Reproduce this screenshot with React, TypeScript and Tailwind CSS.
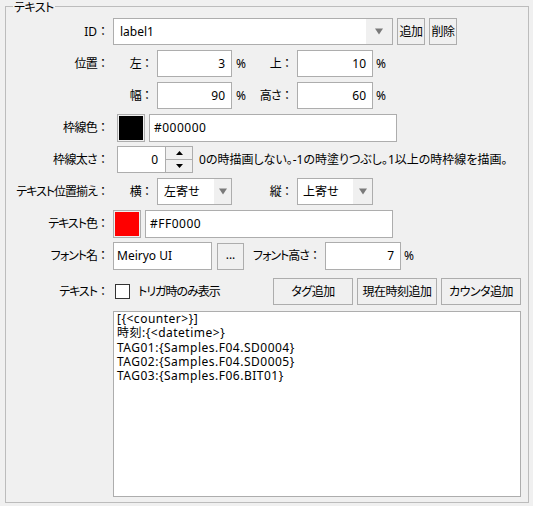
import React from 'react';

const FONT = '"Noto Sans", "Noto Sans CJK JP", sans-serif';

// full-width colon keeps its full cell (no proportional spacing)
function Colon() {
  return <span className="[font-feature-settings:normal] tracking-normal">：</span>;
}

function Label({ text, w = 'w-[107px]', tight = 'tracking-[-0.7px]' }: { text?: string; w?: string; tight?: string }) {
  return (
    <div className={`${w} shrink-0 text-right pr-[4px] whitespace-nowrap`}>
      {text && (
        <>
          <span className={tight}>{text}</span>
          <Colon />
        </>
      )}
    </div>
  );
}

function TextBox({ value, w, align = 'left', pad = 'pl-[4px]', h = 'h-[27px]' }: { value: string; w: string; align?: 'left' | 'right'; pad?: string; h?: string }) {
  return (
    <div className={`${w} ${h} shrink-0 bg-white border border-[#adadad] flex items-center ${pad} ${align === 'right' ? 'justify-end pr-[6px]' : ''}`}>
      {value}
    </div>
  );
}

function Arrow() {
  return (
    <svg width="8" height="7" viewBox="0 0 8 7">
      <path d="M0 0.5 H8 L4 6.5 Z" fill="#7a7a7a" />
    </svg>
  );
}

function Combo({ value, w, pad = 'pl-[6px]', aw = 'w-[19px]' }: { value: string; w: string; pad?: string; aw?: string }) {
  return (
    <div className={`${w} h-[27px] shrink-0 border border-[#adadad] bg-white flex`}>
      <div className={`flex-1 flex items-center ${pad}`}>{value}</div>
      <div className={`${aw} bg-[#f0f0f0] flex items-center justify-center`}>
        <Arrow />
      </div>
    </div>
  );
}

function Btn({ children, w, className = '' }: { children: React.ReactNode; w: string; className?: string }) {
  return (
    <button className={`${w} h-[27px] shrink-0 border border-[#adadad] bg-[#f0f0f0] flex items-center justify-center ${className}`}>
      {children}
    </button>
  );
}

export default function App() {
  return (
    <div
      className="w-[533px] h-[506px] bg-[#f0f0f0] text-[12px] leading-[14px] text-black pt-[6px] pl-[5px] [font-feature-settings:'palt']"
      style={{ fontFamily: FONT }}
    >
      <div className="relative w-[524px] h-[497px] border border-[#bcbcbc] flex flex-col">
        <div className="absolute left-[7px] top-[-6px] bg-[#f0f0f0] px-[1px] leading-[13px] tracking-[-0.5px]">テキスト</div>

        {/* ID */}
        <div className="flex items-center mt-[11px] h-[27px]">
          <Label text="ID" tight="" />
          <Combo value="label1" w="w-[280px]" aw="w-[26px]" />
          <Btn w="w-[28px]" className="ml-[4px] tracking-[-0.5px]">追加</Btn>
          <Btn w="w-[28px]" className="ml-[4px] tracking-[-0.5px]">削除</Btn>
        </div>

        {/* position */}
        <div className="flex items-center mt-[5px] h-[27px]">
          <Label text="位置" />
          <Label text="左" w="w-[44px]" />
          <TextBox value="3" w="w-[75px]" align="right" />
          <div className="w-[24px] pl-[4px]">%</div>
          <Label text="上" w="w-[41px]" />
          <TextBox value="10" w="w-[76px]" align="right" />
          <div className="pl-[3px]">%</div>
        </div>

        <div className="flex items-center mt-[5px] h-[27px]">
          <Label />
          <Label text="幅" w="w-[44px]" />
          <TextBox value="90" w="w-[75px]" align="right" />
          <div className="w-[24px] pl-[4px]">%</div>
          <Label text="高さ" w="w-[41px]" />
          <TextBox value="60" w="w-[76px]" align="right" />
          <div className="pl-[3px]">%</div>
        </div>

        {/* border color */}
        <div className="flex items-center mt-[5px] h-[28px]">
          <Label text="枠線色" />
          <div className="ml-[4px] w-[28px] h-[28px] border border-[#adadad] bg-[#f0f0f0] p-[1px]">
            <div className="w-full h-full bg-black" />
          </div>
          <div className="ml-[4px] tracking-[0.5px]">
            <TextBox value="#000000" w="w-[248px]" h="h-[28px]" />
          </div>
        </div>

        {/* border width */}
        <div className="flex items-center mt-[4px] h-[27px]">
          <Label text="枠線太さ" />
          <div className="ml-[4px] flex h-[27px]">
            <div className="w-[49px] h-full bg-white border border-[#adadad] flex items-center justify-end pr-[7px]">0</div>
            <div className="w-[27px] h-full border border-l-0 border-[#adadad] flex flex-col bg-[#f0f0f0]">
              <div className="flex-1 flex items-center justify-center border-b border-[#adadad]">
                <svg width="7" height="4" viewBox="0 0 7 4"><path d="M0 4 H7 L3.5 0 Z" fill="#000" /></svg>
              </div>
              <div className="flex-1 flex items-center justify-center">
                <svg width="7" height="4" viewBox="0 0 7 4"><path d="M0 0 H7 L3.5 4 Z" fill="#000" /></svg>
              </div>
            </div>
          </div>
          <div className="ml-[6px] whitespace-nowrap">0の時描画しない。-1の時塗りつぶし。1以上の時枠線を描画。</div>
        </div>

        {/* alignment */}
        <div className="flex items-center mt-[5px] h-[27px]">
          <Label text="テキスト位置揃え" tight="tracking-[-1px]" />
          <Label text="横" w="w-[44px]" />
          <Combo value="左寄せ" w="w-[75px]" pad="pl-[6px]" aw="w-[17px]" />
          <Label text="縦" w="w-[65px]" />
          <Combo value="上寄せ" w="w-[76px]" pad="pl-[5px]" aw="w-[19px]" />
        </div>

        {/* text color */}
        <div className="flex items-center mt-[5px] h-[28px]">
          <Label text="テキスト色" tight="tracking-[-1px]" />
          <div className="w-[28px] h-[28px] border border-[#adadad] bg-[#f0f0f0] p-[1px]">
            <div className="w-full h-full bg-[#ff0000]" />
          </div>
          <div className="ml-[4px] tracking-[0.5px]">
            <TextBox value="#FF0000" w="w-[248px]" h="h-[28px]" />
          </div>
        </div>

        {/* font */}
        <div className="flex items-center mt-[4px] h-[28px]">
          <Label text="フォント名" tight="tracking-[-1px]" />
          <TextBox value="Meiryo UI" w="w-[99px]" pad="pl-[3px]" h="h-[28px]" />
          <Btn w="w-[27px]" className="ml-[5px] pb-[2px]">...</Btn>
          <Label text="フォント高さ" w="w-[81px]" tight="tracking-[-1px]" />
          <TextBox value="7" w="w-[76px]" align="right" h="h-[28px]" />
          <div className="pl-[3px]">%</div>
        </div>

        {/* text */}
        <div className="flex items-center mt-[8px] h-[27px]">
          <Label text="テキスト" tight="tracking-[-1px]" />
          <div className="ml-[2px] w-[15px] h-[15px] border border-[#333333] bg-white" />
          <div className="ml-[8px] whitespace-nowrap tracking-[-1px]">トリガ時のみ表示</div>
          <Btn w="w-[80px]" className="ml-auto tracking-[-0.5px]">タグ追加</Btn>
          <Btn w="w-[80px]" className="ml-[4px] tracking-[-0.5px]">現在時刻追加</Btn>
          <Btn w="w-[80px]" className="ml-[4px] mr-[7px] tracking-[-0.5px]">カウンタ追加</Btn>
        </div>

        <div className="flex mt-[6px]">
          <div className="w-[107px] shrink-0" />
          <div className="w-[408px] h-[186px] bg-white border border-[#adadad] pl-[3px] leading-[14.25px] whitespace-pre tracking-[0.5px]">
            {'[{<counter>}]\n時刻:{<datetime>}\nTAG01:{Samples.F04.SD0004}\nTAG02:{Samples.F04.SD0005}\nTAG03:{Samples.F06.BIT01}'}
          </div>
        </div>
      </div>
    </div>
  );
}
